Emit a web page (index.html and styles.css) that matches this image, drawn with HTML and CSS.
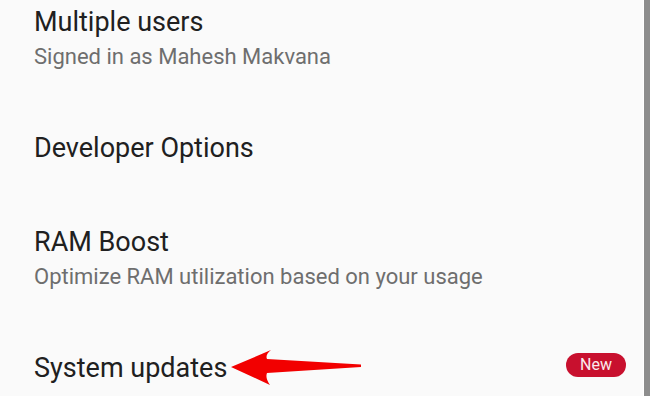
FILE: index.html
```html
<!DOCTYPE html>
<html lang="en">
<head>
  <meta charset="UTF-8" />
  <meta name="viewport" content="width=device-width, initial-scale=1.0" />
  <title>Settings</title>
  <link rel="stylesheet" href="styles.css">
</head>
<body>
  <div class="screen">
    <div class="list">
      <div class="item">
        <div class="title">Multiple users</div>
        <div class="summary">Signed in as Mahesh Makvana</div>
      </div>
      <div class="item">
        <div class="title">Developer Options</div>
      </div>
      <div class="item">
        <div class="title">RAM Boost</div>
        <div class="summary">Optimize RAM utilization based on your usage</div>
      </div>
      <div class="item row">
        <div class="title">System updates</div>
        <span class="badge">New</span>
      </div>
    </div>
    <div class="edge"></div>

    <!-- annotation arrow -->
    <svg class="arrow" width="650" height="396" viewBox="0 0 650 396">
      <path d="M231 367 L271 350 Q265 355 267 359 L361 364.5 L361 367 L267 373 Q265 378 270 385 Z" fill="#f20000"/>
    </svg>
  </div>
</body>
</html>
```

FILE: styles.css
```css
body {
  margin: 0;
  background: #fafafa;
  font-family: Roboto, "Noto Sans", sans-serif;
  overflow: hidden;
}

.screen {
  position: relative;
  display: flex;
  width: 650px;
  height: 396px;
  overflow: hidden;
}

.list {
  flex: 1;
  margin-top: -24px;
  padding-left: 34px;
  padding-right: 17px;
}

.item {
  padding: 28px 0 29px;
}

.item.row {
  display: flex;
  align-items: center;
  justify-content: space-between;
}

.title {
  font-size: 27px;
  line-height: 37px;
  color: #202020;
}

.summary {
  font-size: 22px;
  line-height: 32px;
  color: #6e6e6e;
}

.badge {
  background: #c8102e;
  color: #fbe9ec;
  font-size: 16px;
  line-height: 24px;
  width: 60px;
  text-align: center;
  border-radius: 12px;
  margin-bottom: 8px;
}

.edge {
  width: 6px;
  background: #8d8d8d;
  border-left: 1px solid #fff;
}

.arrow {
  position: absolute;
  left: 0;
  top: 0;
  pointer-events: none;
}
```
